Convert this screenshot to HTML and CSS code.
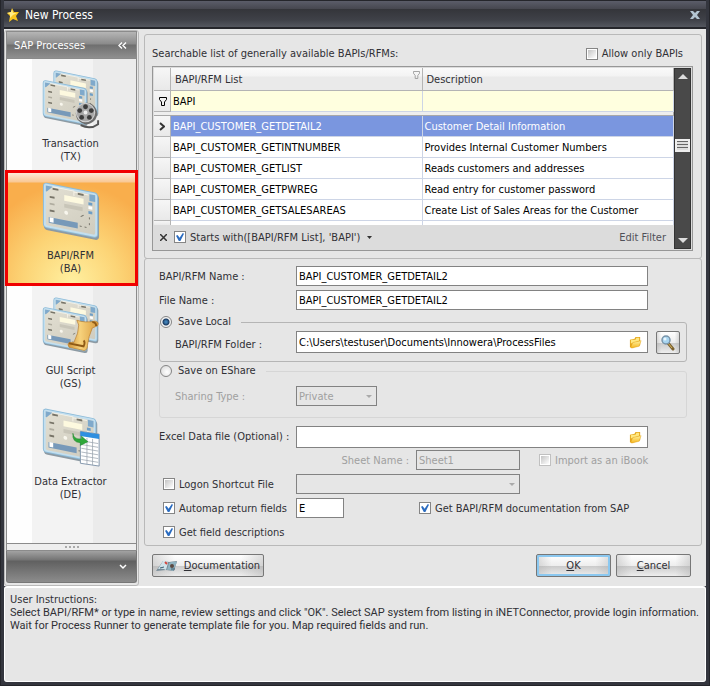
FILE: index.html
```html
<!DOCTYPE html>
<html lang="en">
<head>
<meta charset="utf-8">
<title>New Process</title>
<link rel="stylesheet" href="styles.css">
</head>
<body>
<svg class="defs" aria-hidden="true">
  <defs>
    <linearGradient id="paper" x1="0" y1="0" x2="1" y2="1"><stop offset="0" stop-color="#e2dfd2"/><stop offset="1" stop-color="#cfccbf"/></linearGradient>
    <linearGradient id="gold" x1="0" y1="0" x2="1" y2="0"><stop offset="0" stop-color="#cf9238"/><stop offset=".4" stop-color="#f7d27c"/><stop offset="1" stop-color="#d99c3e"/></linearGradient>
    <linearGradient id="folder" x1="0" y1="0" x2="0" y2="1"><stop offset="0" stop-color="#fff3a0"/><stop offset="1" stop-color="#f5b51d"/></linearGradient>
    <symbol id="panel" viewBox="0 0 60 62">
      <g transform="matrix(1 .2 0 1 1 1)">
        <rect x="1" y="2" width="57" height="47" rx="4" fill="#8d9aa3"/>
        <rect width="57" height="47" rx="4" fill="#8dbbd8"/>
        <rect x="1" y="1" width="55" height="45" rx="3" fill="#c3dfef"/>
        <rect x="3" y="3" width="51" height="41" rx="2" fill="url(#paper)"/>
        <path d="M3 3h7l-6 6h-1zM48 3h6v7h-6z" fill="#7fa9cb"/>
        <path d="M10 3h22v5M32 4h15" fill="none" stroke="#f6f3e8"/>
        <path d="M10 5h6M36 5h6M7 14h5M7 28h5" stroke="#777468" stroke-width="2"/>
        <path d="M7 21h5" stroke="#b0ada0" stroke-width="2"/>
        <rect x="22" y="9" width="20" height="6" fill="#fdf9df"/>
        <rect x="22" y="18" width="19" height="4" fill="#c8c5b8"/>
        <path d="M47 13h4M47 22h4" stroke="#6d9ec6" stroke-width="3"/>
        <path d="M47 17h4" stroke="#fff" stroke-width="3"/>
        <circle cx="24" cy="27" r="2" fill="#f8f6ed"/>
        <path d="M39 28l3-2M48 27v2M48 33v2M38 38h2M43 38h2" stroke="#77756c"/>
        <rect x="6" y="35" width="30" height="6" fill="#7799b9"/>
        <rect x="7" y="35" width="4" height="5" fill="#fff"/>
      </g>
    </symbol>
    <symbol id="pair" viewBox="0 0 60 62">
      <use href="#panel" x="11" y="0" width="48" height="50"/>
      <use href="#panel" x="0" y="10" width="48" height="50"/>
    </symbol>
    <symbol id="open-folder" viewBox="0 0 14 14">
      <path d="M1 4l5-1 1-2 5-0v9l-9 3-2-1z" fill="#e5a51c"/>
      <path d="M2 4l5 0 1-2h3v3L2 8z" fill="#ffe982"/>
      <path d="M4 7l9-2-2 6-8 2-1-1z" fill="url(#folder)" stroke="#e2a31b" stroke-width=".5"/>
    </symbol>
    <symbol id="filter" viewBox="0 0 8 9">
      <path d="M.5 .5h7v2l-2 2.500v3.500h-3V5l-2-2.500z" fill="none" stroke="currentColor"/>
    </symbol>
  </defs>
</svg>

<div class="window">
  <header class="titlebar">
    <svg width="14" height="14" viewBox="0 0 14 14" aria-hidden="true"><path d="M6 0l2 4 5 0-3 4 2 5-5-2-4 3 1-6-3-3 4-1z" fill="#f8c51e"/><path d="M6 1l1 4 4 0-4 2-3 3 0-4-3-1 4-1z" fill="#ffed86"/></svg>
    <h1>New Process</h1>
    <button class="close" aria-label="Close"><svg width="10" height="8" viewBox="0 0 10 8"><path d="M0 0h3l2 2 2-2h3L7 4l3 4H7L5 6 3 8H0l3-4z" fill="#b4c6d3"/></svg></button>
  </header>

  <div class="body">
    <nav class="sidebar" aria-label="SAP Processes">
      <div class="side-head"><h2>SAP Processes</h2><button aria-label="Collapse"><svg width="9" height="7" viewBox="0 0 9 7"><path d="M4 .5l-3 3 3 3M8 .5l-3 3 3 3" fill="none" stroke="#fff" stroke-width="1.400"/></svg></button></div>
      <div class="side-list">
        <button class="item">
          <svg width="60" height="60" viewBox="0 0 60 62"><use href="#pair"/>
            <path d="M40 58q10 5 18-1v-4" fill="none" stroke="#555" stroke-width="2"/>
            <circle cx="46" cy="46" r="11" fill="#6d6d6d"/><circle cx="45" cy="45" r="10" fill="#d2d2d2"/><circle cx="45" cy="45" r="9" fill="#a8a8a8"/>
            <g fill="#3c3c3c"><circle cx="45" cy="39" r="2.500"/><circle cx="51" cy="43" r="2.500"/><circle cx="49" cy="50" r="2.500"/><circle cx="41" cy="50" r="2.500"/><circle cx="39" cy="43" r="2.500"/></g><circle cx="45" cy="45" r="2" fill="#eee"/></svg>
          <span>Transaction<br>(TX)</span>
        </button>
        <button class="item selected" aria-current="true">
          <svg width="60" height="60" viewBox="0 0 60 62"><use href="#panel"/></svg>
          <span>BAPI/RFM<br>(BA)</span>
        </button>
        <button class="item">
          <svg width="60" height="60" viewBox="0 0 60 62"><use href="#pair"/>
            <path d="M36 25q8 3 19 1c3 0 4 3 2 5l-5 2q-4 9-5 18c0 5-3 6-5 5l-14-3q-2-3 0-5l5 0q5-10 5-18z" fill="url(#gold)" stroke="#b87d2c" stroke-width=".7"/>
            <path d="M52 27q4 0 4 4M28 49l15 3q2-4 0-6" fill="none" stroke="#8f5a16" stroke-width="2"/></svg>
          <span>GUI Script<br>(GS)</span>
        </button>
        <button class="item">
          <svg width="64" height="64" viewBox="0 0 64 64"><use href="#panel" x="1" y="0" width="60" height="62"/>
            <path d="M42 26l20 3v34l-20-3z" fill="#fff" stroke="#7f93aa"/><path d="M42 26l20 3v5l-20-3z" fill="#2f8fe0"/>
            <path d="M43 36l18 3M43 40l18 3M43 44l18 3M43 48l18 3M43 52l18 3M43 56l18 3M49 33v28M55 34v28" stroke="#9aa3ad" stroke-width=".8"/>
            <path d="M34 28q1 7 9 6v-3l7 6-8 4v-3q-9 0-8-10z" fill="#2fa83a" stroke="#188124" stroke-width=".5"/></svg>
          <span>Data Extractor<br>(DE)</span>
        </button>
      </div>
      <div class="splitter"><i></i><i></i><i></i><i></i></div>
      <div class="side-foot"><button aria-label="Configure buttons"><svg width="8" height="6" viewBox="0 0 8 6"><path d="M1 1l3 3 3-3" fill="none" stroke="#fff" stroke-width="1.500"/></svg></button></div>
    </nav>

    <main class="main">
      <section class="panel list-panel">
        <div class="list-top">
          <span>Searchable list of generally available BAPIs/RFMs:</span>
          <label class="check"><input type="checkbox">Allow only BAPIs</label>
        </div>
        <div class="grid">
          <div class="grid-left">
            <table>
              <colgroup><col class="c-ind"><col><col></colgroup>
              <thead>
                <tr class="heads"><th></th><th scope="col"><div class="head">BAPI/RFM List<svg width="7" height="8" aria-hidden="true"><use href="#filter"/></svg></div></th><th scope="col">Description</th></tr>
                <tr class="filter"><th><svg width="8" height="9" aria-hidden="true"><use href="#filter"/></svg></th><td><input type="text" value="BAPI" aria-label="Filter by BAPI/RFM"></td><td><input type="text" aria-label="Filter by description"></td></tr>
                <tr class="gap"><td colspan="3"></td></tr>
              </thead>
              <tbody>
                <tr class="current"><th><svg width="6" height="9" viewBox="0 0 6 9" aria-hidden="true"><path d="M1 1l4 3.500-4 3.500" fill="none" stroke="#333" stroke-width="2"/></svg></th><td>BAPI_CUSTOMER_GETDETAIL2</td><td>Customer Detail Information</td></tr>
                <tr><th></th><td>BAPI_CUSTOMER_GETINTNUMBER</td><td>Provides Internal Customer Numbers</td></tr>
                <tr><th></th><td>BAPI_CUSTOMER_GETLIST</td><td>Reads customers and addresses</td></tr>
                <tr><th></th><td>BAPI_CUSTOMER_GETPWREG</td><td>Read entry for customer password</td></tr>
                <tr><th></th><td>BAPI_CUSTOMER_GETSALESAREAS</td><td>Create List of Sales Areas for the Customer</td></tr>
                <tr class="cut"><th></th><td></td><td></td></tr>
              </tbody>
            </table>
            <div class="filterbar">
              <button aria-label="Clear filter"><svg width="7" height="7" viewBox="0 0 7 7"><path d="M0 0l7 7M7 0L0 7" stroke="#333" stroke-width="1.500"/></svg></button>
              <label class="check"><input type="checkbox" checked>Starts with([BAPI/RFM List], 'BAPI')</label>
              <button aria-label="Recent filters"><svg width="5" height="3" viewBox="0 0 5 3"><path d="M0 0h5L2.500 3z" fill="#333"/></svg></button>
              <a class="edit" href="#">Edit Filter</a>
            </div>
          </div>
          <div class="scroll">
            <button aria-label="Scroll up"><svg width="10" height="5" viewBox="0 0 10 5"><path d="M0 5l5-5 5 5z" fill="#ddd"/></svg></button>
            <div class="thumb"></div>
            <button aria-label="Scroll down"><svg width="10" height="5" viewBox="0 0 10 5"><path d="M0 0l5 5 5-5z" fill="#ddd"/></svg></button>
          </div>
        </div>
      </section>

      <form class="panel form">
        <div class="row"><label class="lab" for="bapi">BAPI/RFM Name :</label><input class="box" id="bapi" type="text" value="BAPI_CUSTOMER_GETDETAIL2"></div>
        <div class="row"><label class="lab" for="file">File Name :</label><input class="box" id="file" type="text" value="BAPI_CUSTOMER_GETDETAIL2"></div>
        <fieldset class="group">
          <legend><label class="radio"><input type="radio" name="save" checked>Save Local</label></legend>
          <div class="row folder-row">
            <label class="lab" for="folder-path">BAPI/RFM Folder :</label>
            <div class="box picker"><input id="folder-path" type="text" value="C:\Users\testuser\Documents\Innowera\ProcessFiles"><button type="button" aria-label="Browse"><svg width="13" height="13"><use href="#open-folder"/></svg></button></div>
            <button type="button" class="btn search" aria-label="Search"><svg width="16" height="16" viewBox="0 0 16 16"><path d="M8 8l5 6" stroke="#7c6230" stroke-width="3" stroke-linecap="round"/><path d="M8 8l4 5" stroke="#d5b45c"/><circle cx="6" cy="5" r="4" fill="#a9d5f0" stroke="#7893a8" stroke-width="1.500"/><circle cx="5" cy="4" r="1.500" fill="#e9f7ff"/></svg></button>
          </div>
        </fieldset>
        <fieldset class="group dim">
          <legend><label class="radio"><input type="radio" name="save">Save on EShare</label></legend>
          <div class="row share-row">
            <label class="lab off" for="share">Sharing Type :</label>
            <div class="select small"><select class="box" id="share" disabled><option>Private</option></select></div>
          </div>
        </fieldset>
        <div class="row"><label class="lab" for="excel">Excel Data file (Optional) :</label><div class="box picker"><input id="excel" type="text"><button type="button" aria-label="Browse"><svg width="13" height="13"><use href="#open-folder"/></svg></button></div></div>
        <div class="options">
          <label class="off sheet-lab" for="sheet">Sheet Name :</label>
          <input class="box sheet" id="sheet" type="text" value="Sheet1" disabled>
          <label class="check off ibook"><input type="checkbox" disabled>Import as an iBook</label>
          <label class="check"><input type="checkbox">Logon Shortcut File</label>
          <div class="select shortcut"><select class="box" aria-label="Logon shortcut file" disabled><option></option></select></div>
          <label class="check"><input type="checkbox" checked>Automap return fields</label>
          <input class="box map" type="text" value="E" aria-label="Automap field">
          <label class="check docs"><input type="checkbox" checked>Get BAPI/RFM documentation from SAP</label>
          <label class="check"><input type="checkbox" checked>Get field descriptions</label>
        </div>
      </form>

      <div class="actions">
        <button class="btn doc"><svg width="23" height="14" viewBox="0 0 23 14" aria-hidden="true"><path d="M0 12L7 2l6 1 8-1-3 10-8-1z" fill="#778b97"/><path d="M2 10L7 2q4-1 5 2l-2 7q-3-2-8-1z" fill="#cfe3ea"/><path d="M11 11l2-7q3-2 8-1l-4 9q-3-2-6-1z" fill="#8fb3c1"/><path d="M9 3l2 2" stroke="#d2453c" stroke-width="2"/><circle cx="16" cy="7" r="2" fill="#5b4a42"/><path d="M4 9l4-1M15 10l4 0" stroke="#3c5e70"/></svg><span><u>D</u>ocumentation</span></button>
        <button class="btn ok"><span><u>O</u>K</span></button>
        <button class="btn cancel"><span><u>C</u>ancel</span></button>
      </div>
    </main>
  </div>

  <footer class="instructions">
    <h2>User Instructions:</h2>
    <p>Select BAPI/RFM* or type in name, review settings and click "OK". Select SAP system from listing in iNETConnector, provide login information.<br>Wait for Process Runner to generate template file for you. Map required fields and run.</p>
  </footer>
</div>
</body>
</html>
```

FILE: styles.css
```css
* { box-sizing: border-box; }
body, h1, h2, p { margin: 0; }
body, button, input, select {
  font: 11px/13px "DejaVu Sans Condensed", "DejaVu Sans", sans-serif;
  color: #303035;
}
button { padding: 0; border: 0; background: none; }
input, select { margin: 0; }
svg { display: block; flex: none; }
h1, h2 { font-size: 11px; font-weight: normal; }
.defs { position: absolute; width: 0; height: 0; }

.window {
  display: flex;
  flex-direction: column;
  min-height: 100vh;
  padding: 0 3px 3px;
  background: #34363e;
  border: 1px solid #24252a;
  border-top: 0;
}
.titlebar {
  display: flex;
  align-items: center;
  gap: 5px;
  height: 29px;
  padding: 0 6px 0 2px;
  background: linear-gradient(#25262b 0 1px, #5b5d69 1px, #46474f 9px, #34353a 9px, #3f4148 20px, #54575f 27px, #25262b 27px);
}
.titlebar h1 { font-size: 12px; line-height: 16px; color: #fff; }
.close { margin-left: auto; }

.body { display: flex; gap: 5px; padding: 1px 4px 0 0; background: #e6e6e6; }

.sidebar {
  display: flex;
  flex-direction: column;
  flex: none;
  width: 135px;
  border: 1px solid #b9b9b9;
  border-radius: 3px;
  padding: 0 1px 2px;
}
.side-head {
  display: flex;
  align-items: center;
  justify-content: space-between;
  height: 28px;
  padding: 0 9px 0 7px;
  border: 1px solid #8b8b8b;
  background: linear-gradient(#b5b5b5, #8a8a8a 12px, #6f6f6f 13px, #8f8f8f);
}
.side-head h2 { color: #fff; }
.side-list {
  flex: 1;
  border: solid #8b8b8b;
  border-width: 0 1px;
  background: linear-gradient(90deg, #fefefe 25px, #f3f3f3 25px 86px, #ebebeb 86px);
}
.item {
  display: flex;
  flex-direction: column;
  align-items: center;
  gap: 8px;
  width: 100%;
  padding: 10px 2px 7px 0;
  text-align: center;
}
.item svg { height: 60px; }
.item.selected {
  width: calc(100% + 4px);
  margin: 0 -2px;
  padding: 8px 2px 8px 0;
  border: 3px solid #f00000;
  background:
    linear-gradient(#fdebd7, #f9c894 9px, transparent 10px),
    radial-gradient(ellipse 75% 90% at 50% 100%, #fff0a0, #fcd476 50%, transparent),
    #f9ae4c;
}
.splitter {
  display: flex;
  justify-content: center;
  align-items: center;
  gap: 2px;
  height: 8px;
  border: 1px solid #8b8b8b;
  background: #eee;
}
.splitter i { width: 2px; height: 2px; background: #aaa; }
.side-foot {
  display: flex;
  justify-content: flex-end;
  align-items: center;
  height: 32px;
  padding-right: 9px;
  border: 1px solid #777;
  border-top: 0;
  border-radius: 0 0 3px 3px;
  background: linear-gradient(#a2a2a2, #747474 9px, #606060 10px, #8c8c8c);
}

.main { flex: 1; min-width: 0; padding-top: 4px; }
.panel { border: 1px solid #b9b9b9; border-radius: 3px; }
.list-panel { padding: 6px 8px 7px 7px; }
.list-top {
  display: flex;
  align-items: center;
  justify-content: space-between;
  height: 25px;
  padding-right: 10px;
}
.check, .radio { display: flex; align-items: center; gap: 4px; white-space: nowrap; }
.check input {
  appearance: none;
  display: grid;
  place-items: center;
  flex: none;
  width: 12px;
  height: 12px;
  border: 1px solid #858585;
  background: #fff;
}
.check input::before {
  content: "";
  width: 8px;
  height: 8px;
  background: linear-gradient(135deg, #c4c4c4, #fff);
}
.check input:checked::before {
  background: #2b6cc0;
  clip-path: polygon(0 35%, 20% 25%, 45% 60%, 85% 0, 100% 10%, 55% 100%, 35% 100%);
}
.check input:disabled { border-color: #c0c0c0; }
.radio { gap: 6px; }
.radio input {
  appearance: none;
  width: 12px;
  height: 12px;
  border: 1px solid #858585;
  border-radius: 50%;
  background: radial-gradient(circle at 60% 60%, #fff, #d5d5d5);
}
.radio input:checked { background: radial-gradient(circle, #3f7fb5 1px, #1c3c62 3px, #f4f4f4 4px); }

.grid { display: flex; border: 1px solid #979797; padding: 1px; background: #dcdcdc; }
.grid-left { flex: 1; min-width: 0; }
table { width: 100%; table-layout: fixed; border-collapse: separate; border-spacing: 0; background: #fff; color: #000; }
.c-ind { width: 17px; }
tr { height: 21px; }
th { font-weight: normal; text-align: left; }
th, td {
  padding: 0 2px;
  border: solid #cdd5e6;
  border-width: 0 1px 1px 0;
  white-space: nowrap;
  overflow: hidden;
}
tr > th:first-child { padding: 0 0 0 5px; border-color: #b4b4b4; background: linear-gradient(#f6f6f6, #e9e9e9); }
.heads { height: 23px; }
.heads th { padding: 0 4px; border-color: #b4b4b4; background: linear-gradient(#fafafa, #f3f3f3 8px, #eaeaea 9px); color: #303035; }
.head { display: flex; justify-content: space-between; }
.head svg { margin: -2px -2px 0 0; color: #999; }
.filter td { background: #ffffdf; }
.filter input { width: 100%; padding: 0; border: 0; background: none; color: #000; }
.gap { height: 4px; }
.gap td { padding: 0; border-color: #a8a8a8; background: #eee; }
.current td { background: #7a96df; color: #fff; }
.cut { height: 4px; }
.cut th, .cut td { border-bottom: 0; }
.filterbar { display: flex; align-items: center; gap: 7px; height: 24px; padding: 0 8px 0 6px; }
.edit { margin-left: auto; color: #505058; text-decoration: none; }
.scroll {
  display: flex;
  flex-direction: column;
  align-items: center;
  width: 17px;
  padding: 5px 0;
  border: 1px solid #333;
  background: #494949;
}
.thumb {
  width: 15px;
  height: 13px;
  margin: 60px 0 auto;
  border: 2px solid #eee;
  background: repeating-linear-gradient(#666 0 1px, #ddd 1px 3px);
}

.form { padding: 7px 14px 3px; margin-top: -1px; }
.row { display: flex; margin-bottom: 4px; padding-right: 39px; }
.lab { flex: none; width: 137px; padding-top: 4px; white-space: nowrap; }
.box {
  flex: 1;
  min-width: 0;
  height: 20px;
  padding: 0 2px;
  border: 1px solid #828282;
  border-radius: 0;
  background: #fff;
  color: #000;
}
.box:disabled { background: transparent; color: #a0a0a0; opacity: 1; }
.picker { display: flex; align-items: center; height: 22px; padding-right: 5px; }
.picker input { flex: 1; min-width: 0; padding: 0; border: 0; background: none; color: #000; }
.group { min-width: 0; margin: 5px 0 2px; padding: 2px 6px 7px 15px; border: 1px solid #b5b5b5; border-radius: 3px; }
.group legend { height: 14px; margin-left: -15px; padding: 0 10px 0 0; }
.group .row { margin: 0; padding: 0; }
.group .lab { width: 121px; padding-top: 7px; }
.group.dim { margin: 2px 0 8px; padding: 8px 0 11px 15px; border-color: #d6d6d6; }
.dim .lab { padding-top: 4px; }
.search { width: 24px; margin-left: 8px; }
.off { color: #a0a0a0; }
.select { position: relative; display: flex; }
.select::after {
  content: "";
  position: absolute;
  right: 5px;
  top: 9px;
  border: solid transparent;
  border-width: 3px 3px 0;
  border-top-color: #aaa;
}
.select select { appearance: none; }
.small { width: 81px; }
.options {
  display: grid;
  grid-template-columns: 133px 120px 104px 1fr;
  grid-auto-rows: 20px;
  row-gap: 4px;
  align-items: center;
  margin-top: -2px;
  padding-left: 4px;
}
.sheet-lab { grid-column: 1 / 3; justify-self: end; padding-right: 7px; }
.ibook { padding-left: 19px; }
.shortcut { grid-column: 2 / 4; }
.options > .check:not(.ibook):not(.docs) { grid-column: 1; }
.map { width: 48px; }
.options > .docs { grid-column: 3 / 5; padding-left: 3px; }

.actions { display: flex; gap: 5px; padding: 8px 11px 9px 8px; }
.btn {
  display: flex;
  align-items: center;
  justify-content: center;
  height: 23px;
  border: 1px solid #777;
  border-radius: 2px;
  background: linear-gradient(90deg, #aaa6, transparent 20% 80%, #aaa6), linear-gradient(#fff, #ededed 11px, #cacaca 11px, #eee);
}
.btn.doc { gap: 5px; width: 112px; margin-right: auto; }
.ok, .cancel { width: 75px; }
.btn.ok { box-shadow: inset 0 0 0 2px #8bc8f0; }

.instructions {
  flex: 1;
  padding: 5px;
  border: 1px solid #fff;
  border-top-width: 2px;
  border-radius: 3px;
  background: #e6e6e6;
}
.instructions p { font-family: Roboto, "Liberation Sans", sans-serif; }
```
